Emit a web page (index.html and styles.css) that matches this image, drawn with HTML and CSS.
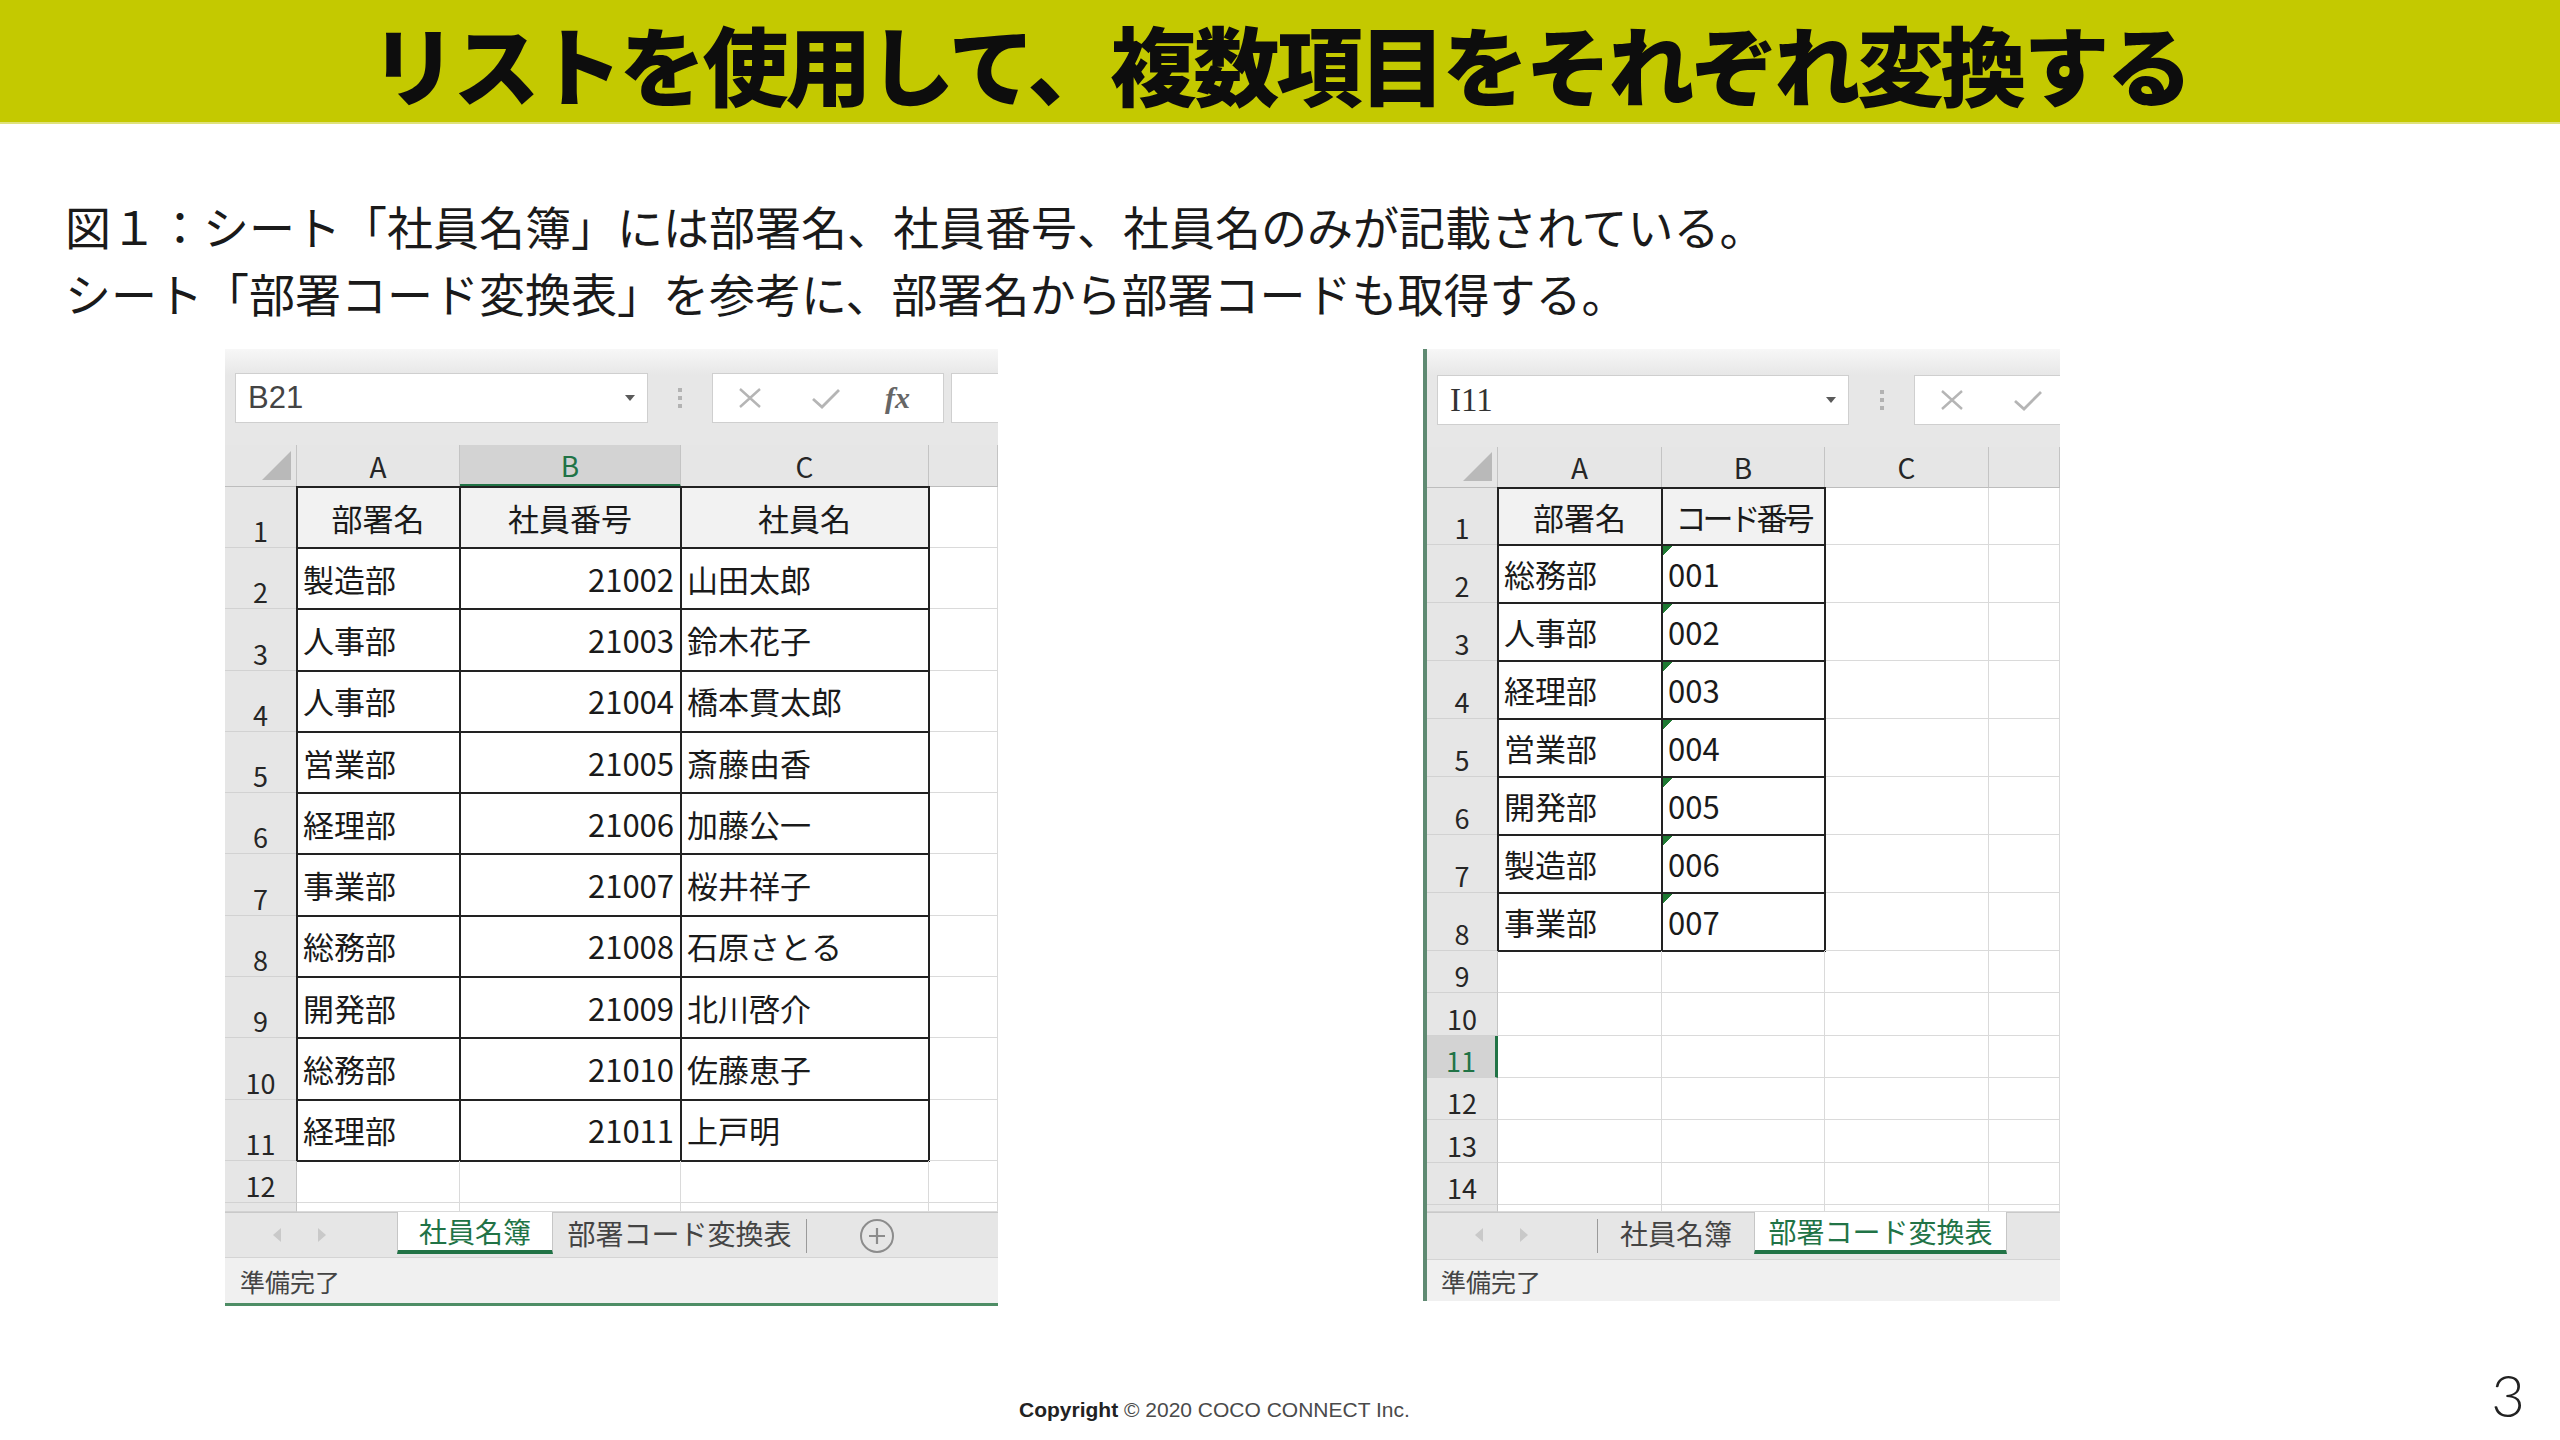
FILE: index.html
```html
<!DOCTYPE html>
<html lang="ja">
<head>
    <meta charset="UTF-8">
    <title>リストを使用して、複数項目をそれぞれ変換する</title>
    <link rel="stylesheet" href="styles.css">
</head>
<body>
<div class="page">
    <header class="title-band">
        <h1>リストを使用して、複数項目をそれぞれ変換する</h1>
    </header>

    <div class="intro">
        <p>図１：シート「社員名簿」には部署名、社員番号、社員名のみが記載されている。</p>
        <p>シート「部署コード変換表」を参考に、部署名から部署コードも取得する。</p>
    </div>

    <div class="sheets">
        <!-- sheet 1 : 社員名簿 -->
        <div class="sheet left">
            <div class="fbar">
                <div class="namebox"><span class="val">B21</span><span class="drop"></span></div>
                <div class="dots"><i></i><i></i><i></i></div>
                <div class="fbox">
                    <svg class="ico-x" width="26" height="22" viewBox="0 0 26 22"><path d="M3 2 L23 20 M23 2 L3 20" stroke="#b5b5b5" stroke-width="2.4" fill="none"/></svg>
                    <svg class="ico-ok" width="30" height="22" viewBox="0 0 30 22"><path d="M2 12 L11 20 L28 3" stroke="#b5b5b5" stroke-width="2.8" fill="none"/></svg>
                    <span class="fx">fx</span>
                </div>
                <div class="finput"></div>
            </div>
            <div class="grid">
                <div class="corner"></div><div class="ch">A</div><div class="ch sel">B</div><div class="ch">C</div><div class="ch"></div>

                <div class="rh">1</div><div class="c bx hd">部署名</div><div class="c bx hd">社員番号</div><div class="c bx hd">社員名</div><div class="c"></div>
                <div class="rh">2</div><div class="c bx">製造部</div><div class="c bx r">21002</div><div class="c bx">山田太郎</div><div class="c"></div>
                <div class="rh">3</div><div class="c bx">人事部</div><div class="c bx r">21003</div><div class="c bx">鈴木花子</div><div class="c"></div>
                <div class="rh">4</div><div class="c bx">人事部</div><div class="c bx r">21004</div><div class="c bx">橋本貫太郎</div><div class="c"></div>
                <div class="rh">5</div><div class="c bx">営業部</div><div class="c bx r">21005</div><div class="c bx">斎藤由香</div><div class="c"></div>
                <div class="rh">6</div><div class="c bx">経理部</div><div class="c bx r">21006</div><div class="c bx">加藤公一</div><div class="c"></div>
                <div class="rh">7</div><div class="c bx">事業部</div><div class="c bx r">21007</div><div class="c bx">桜井祥子</div><div class="c"></div>
                <div class="rh">8</div><div class="c bx">総務部</div><div class="c bx r">21008</div><div class="c bx">石原さとる</div><div class="c"></div>
                <div class="rh">9</div><div class="c bx">開発部</div><div class="c bx r">21009</div><div class="c bx">北川啓介</div><div class="c"></div>
                <div class="rh">10</div><div class="c bx">総務部</div><div class="c bx r">21010</div><div class="c bx">佐藤恵子</div><div class="c"></div>
                <div class="rh">11</div><div class="c bx">経理部</div><div class="c bx r">21011</div><div class="c bx">上戸明</div><div class="c"></div>
                <div class="rh">12</div><div class="c"></div><div class="c"></div><div class="c"></div><div class="c"></div>
                <div class="rh"></div><div class="c"></div><div class="c"></div><div class="c"></div><div class="c"></div>
            </div>
            <div class="tabs">
                <div class="nav">
                    <svg width="8" height="14" viewBox="0 0 8 14"><path d="M8 0 L0 7 L8 14 Z" fill="#c9c9c9"/></svg>
                    <svg width="8" height="14" viewBox="0 0 8 14"><path d="M0 0 L8 7 L0 14 Z" fill="#c9c9c9"/></svg>
                </div>
                <div class="tab on">社員名簿</div>
                <div class="tab">部署コード変換表</div>
                <div class="sep"></div>
                <svg class="add" width="36" height="36" viewBox="0 0 36 36"><circle cx="18" cy="18" r="16" stroke="#8c8c8c" stroke-width="2" fill="none"/><path d="M18 10 V26 M10 18 H26" stroke="#8c8c8c" stroke-width="2.2"/></svg>
            </div>
            <div class="status">準備完了</div>
        </div>

        <!-- sheet 2 : 部署コード変換表 -->
        <div class="sheet right">
            <div class="fbar">
                <div class="namebox serif"><span class="val">I11</span><span class="drop"></span></div>
                <div class="dots"><i></i><i></i><i></i></div>
                <div class="fbox">
                    <svg class="ico-x" width="26" height="22" viewBox="0 0 26 22"><path d="M3 2 L23 20 M23 2 L3 20" stroke="#b5b5b5" stroke-width="2.4" fill="none"/></svg>
                    <svg class="ico-ok" width="30" height="22" viewBox="0 0 30 22"><path d="M2 12 L11 20 L28 3" stroke="#b5b5b5" stroke-width="2.8" fill="none"/></svg>
                </div>
            </div>
            <div class="grid">
                <div class="corner"></div><div class="ch">A</div><div class="ch">B</div><div class="ch">C</div><div class="ch"></div>

                <div class="rh">1</div><div class="c bx hd">部署名</div><div class="c bx hd tight">コード番号</div><div class="c"></div><div class="c"></div>
                <div class="rh">2</div><div class="c bx">総務部</div><div class="c bx tx">001</div><div class="c"></div><div class="c"></div>
                <div class="rh">3</div><div class="c bx">人事部</div><div class="c bx tx">002</div><div class="c"></div><div class="c"></div>
                <div class="rh">4</div><div class="c bx">経理部</div><div class="c bx tx">003</div><div class="c"></div><div class="c"></div>
                <div class="rh">5</div><div class="c bx">営業部</div><div class="c bx tx">004</div><div class="c"></div><div class="c"></div>
                <div class="rh">6</div><div class="c bx">開発部</div><div class="c bx tx">005</div><div class="c"></div><div class="c"></div>
                <div class="rh">7</div><div class="c bx">製造部</div><div class="c bx tx">006</div><div class="c"></div><div class="c"></div>
                <div class="rh">8</div><div class="c bx">事業部</div><div class="c bx tx">007</div><div class="c"></div><div class="c"></div>
                <div class="rh">9</div><div class="c"></div><div class="c"></div><div class="c"></div><div class="c"></div>
                <div class="rh">10</div><div class="c"></div><div class="c"></div><div class="c"></div><div class="c"></div>
                <div class="rh sel">11</div><div class="c"></div><div class="c"></div><div class="c"></div><div class="c"></div>
                <div class="rh">12</div><div class="c"></div><div class="c"></div><div class="c"></div><div class="c"></div>
                <div class="rh">13</div><div class="c"></div><div class="c"></div><div class="c"></div><div class="c"></div>
                <div class="rh">14</div><div class="c"></div><div class="c"></div><div class="c"></div><div class="c"></div>
                <div class="rh"></div><div class="c"></div><div class="c"></div><div class="c"></div><div class="c"></div>
            </div>
            <div class="tabs">
                <div class="nav">
                    <svg width="8" height="14" viewBox="0 0 8 14"><path d="M8 0 L0 7 L8 14 Z" fill="#c9c9c9"/></svg>
                    <svg width="8" height="14" viewBox="0 0 8 14"><path d="M0 0 L8 7 L0 14 Z" fill="#c9c9c9"/></svg>
                </div>
                <div class="sep"></div>
                <div class="tab">社員名簿</div>
                <div class="tab on">部署コード変換表</div>
            </div>
            <div class="status">準備完了</div>
        </div>
    </div>

    <footer class="footer">
        <div class="copy"><b>Copyright</b> © 2020 COCO CONNECT Inc.</div>
        <div class="pageno">3</div>
    </footer>
</div>
</body>
</html>
```

FILE: styles.css
```css
* {
    box-sizing: border-box;
}

body {
    margin: 0;
    background-color: #ffffff;
    color: #111111;
    font-family: "Noto Sans CJK JP", sans-serif;
}

.page {
    width: 2560px;
    height: 1440px;
    display: flex;
    flex-direction: column;
    overflow: hidden;
}

/* title band */
.title-band {
    height: 124px;
    flex: none;
    background-color: #c4c900;
    border-bottom: 2px solid #dfe27c;
    display: flex;
    align-items: flex-start;
    justify-content: center;
}

.title-band h1 {
    margin: 0;
    font-size: 86px;
    line-height: 125px;
    font-weight: 900;
    letter-spacing: -3px;
    color: #0d0d0d;
}

.intro {
    margin: 68px 0 0 65px;
    font-size: 46px;
    line-height: 67px;
    color: #1a1a1a;
}

.intro p {
    margin: 0;
}

/* spreadsheets */
.sheets {
    display: flex;
    align-items: flex-start;
    gap: 425px;
    margin-top: 23px;
    padding-left: 225px;
}

.sheet {
    display: flex;
    flex-direction: column;
    overflow: hidden;
    background-color: #ffffff;
}

.sheet.left {
    width: 773px;
    border-bottom: 3px solid #4e8d65;
}

.sheet.right {
    width: 637px;
    border-left: 4px solid #5f8a72;
}

.fbar {
    height: 96px;
    display: flex;
    align-items: flex-start;
    padding: 24px 0 0 10px;
    background: linear-gradient(#f7f7f7, #e7e7e7 26px);
}

.right .fbar {
    height: 98px;
    padding-top: 26px;
}

.namebox {
    width: 413px;
    height: 50px;
    flex: none;
    display: flex;
    align-items: center;
    padding: 0 12px 0 12px;
    background-color: #ffffff;
    border: 1px solid #cfcfcf;
    font-family: "Liberation Sans", sans-serif;
    font-size: 31px;
    color: #444444;
}

.right .namebox {
    width: 412px;
}

.namebox.serif {
    font-family: "Liberation Serif", serif;
    font-size: 33px;
    color: #333333;
}

.namebox .val {
    flex: 1;
}

.namebox .drop {
    border-top: 6px solid #5a5a5a;
    border-left: 5px solid transparent;
    border-right: 5px solid transparent;
}

.dots {
    width: 64px;
    height: 50px;
    flex: none;
    display: flex;
    flex-direction: column;
    align-items: center;
    justify-content: center;
    gap: 4px;
}

.right .dots {
    width: 65px;
}

.dots i {
    width: 4px;
    height: 4px;
    background-color: #b3b3b3;
}

.fbox {
    width: 232px;
    height: 50px;
    flex: none;
    display: flex;
    align-items: center;
    gap: 48px;
    padding-left: 24px;
    background-color: #ffffff;
    border: 1px solid #cfcfcf;
}

.fbox .fx {
    margin-left: -4px;
    font-family: "Liberation Serif", serif;
    font-style: italic;
    font-weight: bold;
    font-size: 30px;
    color: #666666;
}

.finput {
    flex: none;
    width: 80px;
    height: 50px;
    margin-left: 7px;
    background-color: #ffffff;
    border: 1px solid #cfcfcf;
}

/* grid */
.grid {
    display: grid;
    overflow: hidden;
}

.left .grid {
    height: 767px;
    grid-template-columns: 72px 163px 221px 248px 1fr;
    grid-template-rows: 42px 61px repeat(10, 61.3px) 42px 9px;
}

.right .grid {
    height: 765px;
    grid-template-columns: 71px 164px 163px 164px 1fr;
    grid-template-rows: 41px 57px repeat(7, 58px) repeat(6, 42.33px) 7px;
}

.corner {
    display: flex;
    justify-content: flex-end;
    align-items: flex-end;
    padding: 0 5px 6px 0;
    background-color: #e6e6e6;
    border-right: 1px solid #c4c4c4;
    border-bottom: 1px solid #bdbdbd;
}

.corner::after {
    content: "";
    border-left: 29px solid transparent;
    border-bottom: 29px solid #b9b9b9;
}

.ch {
    display: flex;
    align-items: center;
    justify-content: center;
    background-color: #e6e6e6;
    border-right: 1px solid #c4c4c4;
    border-bottom: 1px solid #bdbdbd;
    font-size: 28px;
    color: #262626;
}

.ch.sel {
    background-color: #d3d3d3;
    color: #217346;
    border-bottom: 3px solid #217346;
}

.rh {
    display: flex;
    align-items: flex-end;
    justify-content: center;
    padding-bottom: 3px;
    background-color: #e6e6e6;
    border-right: 1px solid #c4c4c4;
    border-bottom: 1px solid #d2d2d2;
    font-size: 27px;
    line-height: 1;
    color: #262626;
}

.rh.sel {
    background-color: #d3d3d3;
    color: #217346;
    border-right: 3px solid #217346;
}

.c {
    display: flex;
    align-items: center;
    padding: 0 6px;
    border-right: 1px solid #dadada;
    border-bottom: 1px solid #dadada;
    font-size: 31px;
    color: #1a1a1a;
    white-space: nowrap;
}

.c.bx {
    outline: 2px solid #222222;
    outline-offset: -1px;
}

.c.hd {
    justify-content: center;
    background-color: #f2f2f2;
}

.c.tight {
    letter-spacing: -4px;
}

.c.r {
    justify-content: flex-end;
}

.c.tx {
    background: linear-gradient(135deg, #1f7a33 0 8px, transparent 8px) no-repeat;
    background-size: 12px 12px;
}

/* sheet tabs + status */
.tabs {
    height: 46px;
    display: flex;
    align-items: flex-start;
    background-color: #e6e6e6;
    border-top: 1px solid #c9c9c9;
    border-bottom: 1px solid #d4d4d4;
}

.right .tabs {
    height: 48px;
}

.nav {
    width: 172px;
    flex: none;
    display: flex;
    gap: 37px;
    padding: 15px 0 0 48px;
}

.right .nav {
    width: 170px;
}

.tab {
    height: 40px;
    flex: none;
    display: flex;
    align-items: center;
    justify-content: center;
    font-size: 28px;
    color: #444444;
}

.tab:first-of-type,
.left .tab.on {
    width: 156px;
}

.tab.on {
    height: 42px;
    margin-top: -1px;
    background-color: #ffffff;
    color: #217346;
    border-left: 1px solid #c6c6c6;
    border-right: 1px solid #c6c6c6;
    border-bottom: 4px solid #217346;
}

.left .tab:not(.on),
.right .tab.on {
    width: 253px;
}

.right .tab:not(.on) {
    width: 156px;
}

.sep {
    width: 1px;
    height: 34px;
    margin-top: 6px;
    background-color: #9a9a9a;
}

.add {
    margin: 5px 0 0 52px;
}

.status {
    height: 45px;
    display: flex;
    align-items: center;
    padding-left: 15px;
    background-color: #f0f0f0;
    font-size: 25px;
    color: #444444;
}

.right .status {
    height: 41px;
    padding-left: 14px;
}

/* footer */
.footer {
    margin-top: auto;
    display: flex;
    align-items: baseline;
    padding: 0 35px 16px 1019px;
    line-height: 1;
    font-family: "Liberation Sans", sans-serif;
}

.copy {
    font-size: 21px;
    color: #4a4a4a;
}

.copy b {
    color: #222222;
}

.pageno {
    margin-left: auto;
    font-family: Lato, "Liberation Sans", sans-serif;
    font-weight: 300;
    font-size: 58px;
    color: #222222;
}
```
